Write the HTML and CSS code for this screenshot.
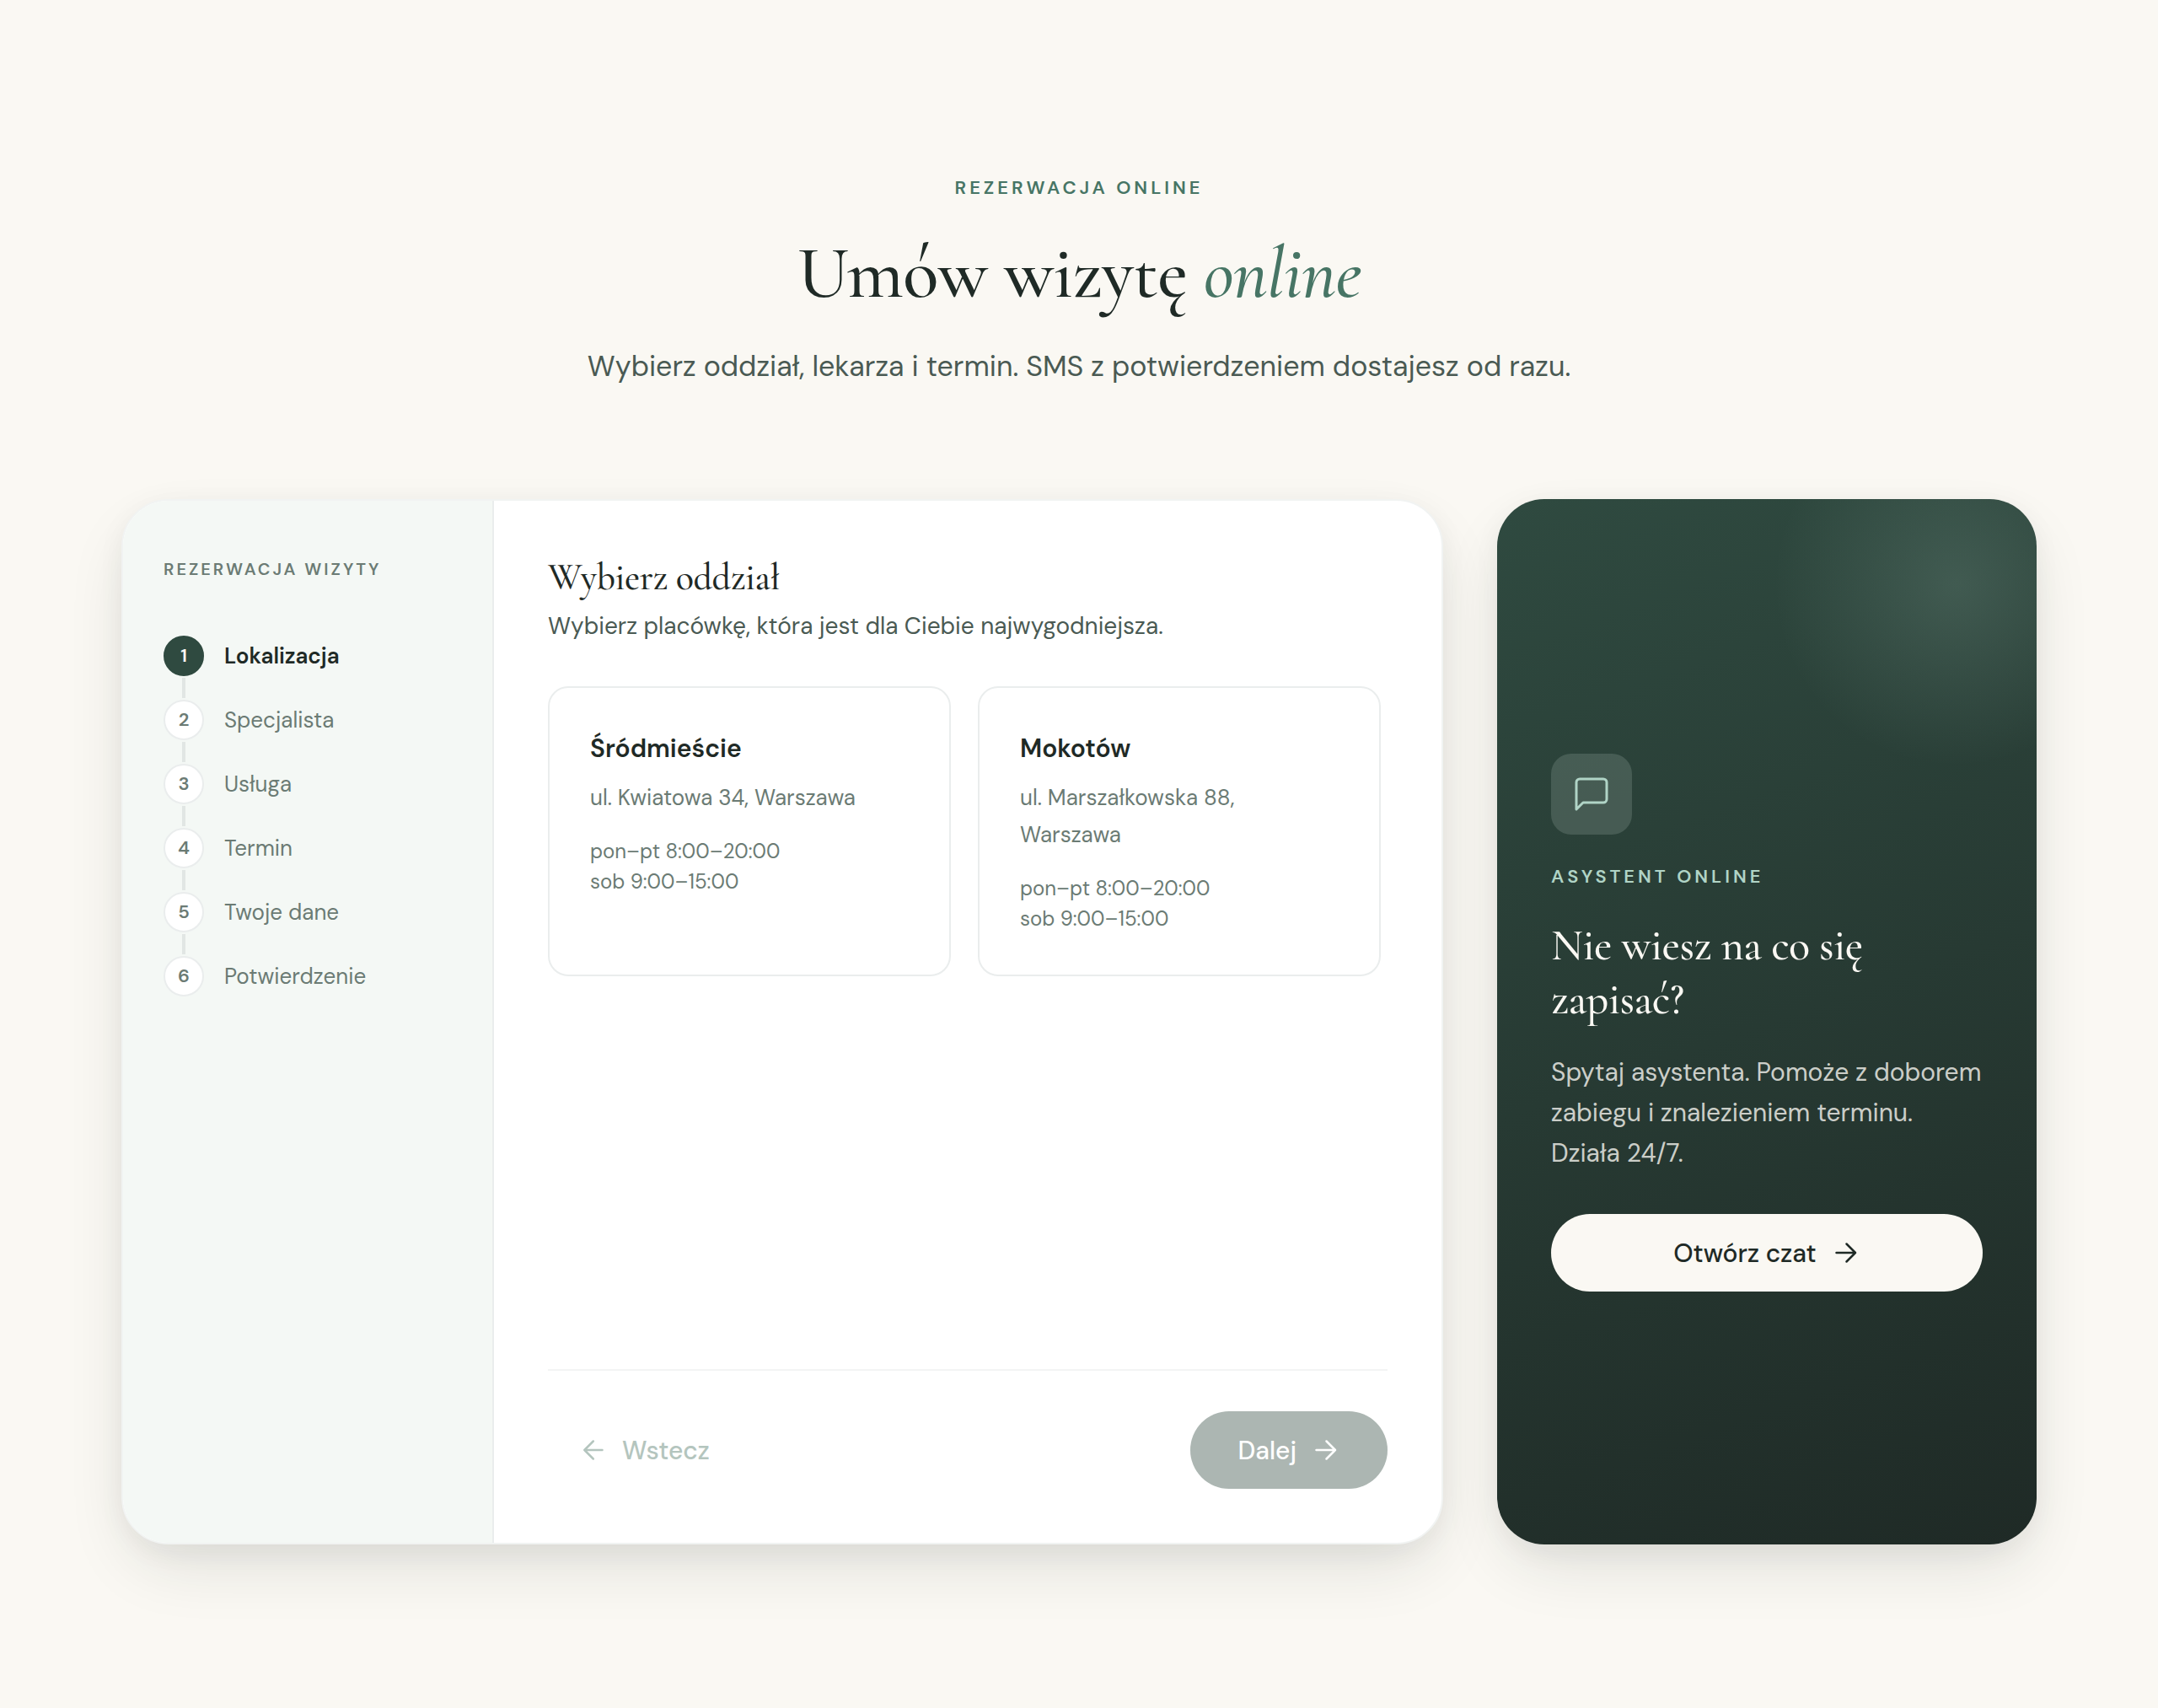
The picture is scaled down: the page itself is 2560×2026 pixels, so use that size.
FILE: index.html
```html
<!DOCTYPE html>
<html lang="pl">
<head>
<meta charset="utf-8">
<meta name="viewport" content="width=device-width, initial-scale=1">
<title>Umów wizytę online</title>
<link rel="stylesheet" href="styles.css">
</head>
<body>
<main class="booking">
  <header class="intro">
    <p class="eyebrow">REZERWACJA ONLINE</p>
    <h1 class="intro-title">Umów wizytę <em>online</em></h1>
    <p class="intro-lead">Wybierz oddział, lekarza i termin. SMS z potwierdzeniem dostajesz od razu.</p>
  </header>

  <div class="columns">
    <section class="wizard">
      <aside class="sidebar">
        <h2 class="sidebar-title">REZERWACJA WIZYTY</h2>
        <ol class="steps">
          <li class="step step-active"><span class="step-number">1</span><span class="step-label">Lokalizacja</span></li>
          <li class="step"><span class="step-number">2</span><span class="step-label">Specjalista</span></li>
          <li class="step"><span class="step-number">3</span><span class="step-label">Usługa</span></li>
          <li class="step"><span class="step-number">4</span><span class="step-label">Termin</span></li>
          <li class="step"><span class="step-number">5</span><span class="step-label">Twoje dane</span></li>
          <li class="step"><span class="step-number">6</span><span class="step-label">Potwierdzenie</span></li>
        </ol>
      </aside>
      <div class="panel">
        <h2 class="panel-title">Wybierz oddział</h2>
        <p class="panel-lead">Wybierz placówkę, która jest dla Ciebie najwygodniejsza.</p>
        <div class="branches">
          <button type="button" class="branch">
            <span class="branch-name">Śródmieście</span>
            <span class="branch-address">ul. Kwiatowa 34, Warszawa</span>
            <span class="branch-hours">pon–pt 8:00–20:00<br>sob 9:00–15:00</span>
          </button>
          <button type="button" class="branch">
            <span class="branch-name">Mokotów</span>
            <span class="branch-address">ul. Marszałkowska 88, Warszawa</span>
            <span class="branch-hours">pon–pt 8:00–20:00<br>sob 9:00–15:00</span>
          </button>
        </div>
        <div class="actions">
          <button type="button" class="button button-back" disabled>
            <svg class="arrow" viewBox="0 0 32 32" aria-hidden="true"><path d="M28.5 16H7.3M17.8 5.5 7.3 16l10.5 10.5"/></svg>
            Wstecz
          </button>
          <button type="button" class="button button-next" disabled>
            Dalej
            <svg class="arrow" viewBox="0 0 32 32" aria-hidden="true"><path d="M3.5 16H26M15.5 5.5 26 16 15.5 26.5"/></svg>
          </button>
        </div>
      </div>
    </section>

    <aside class="assistant">
      <span class="assistant-icon">
        <svg viewBox="0 0 24 24" aria-hidden="true"><path d="M21 15a2 2 0 0 1-2 2H7l-4 4V5a2 2 0 0 1 2-2h14a2 2 0 0 1 2 2z"/></svg>
      </span>
      <p class="assistant-label">ASYSTENT ONLINE</p>
      <h2 class="assistant-title">Nie wiesz na co się zapisać?</h2>
      <p class="assistant-text">Spytaj asystenta. Pomoże z doborem zabiegu i znalezieniem terminu. Działa 24/7.</p>
      <button type="button" class="button button-chat">
        Otwórz czat
        <svg class="arrow" viewBox="0 0 32 32" aria-hidden="true"><path d="M3.5 16H26M15.5 5.5 26 16 15.5 26.5"/></svg>
      </button>
    </aside>
  </div>
</main>
</body>
</html>
```
FILE: styles.css
```css
:root {
  --ink: #1f2a26;
  --forest: #2f4a40;
  --green: #477565;
  --text: #4a5a53;
  --muted: #6b7b74;
  --mint: #b0d4c6;
  --cream: #faf8f3;
  --line: #eaeded;
  --sans: "DM Sans", Inter, "Open Sans", sans-serif;
  --serif: "Cormorant Garamond", "Liberation Serif", serif;
}

* {
  box-sizing: border-box;
}

body {
  margin: 0;
  background: var(--cream);
  color: var(--ink);
  font-family: var(--sans);
}

h1, h2, p, ol {
  margin: 0;
  padding: 0;
  font-weight: 400;
}

button {
  font-family: inherit;
}

.booking {
  max-width: 2400px;
  margin: 0 auto;
  padding: 204px 64px 194px;
}

.intro {
  display: flex;
  flex-direction: column;
  align-items: center;
  margin-bottom: 128px;
  text-align: center;
}

.eyebrow {
  color: var(--green);
  font-size: 22px;
  font-weight: 600;
  line-height: 38px;
  letter-spacing: 4px;
}

.intro-title,
.panel-title,
.assistant-title {
  font-family: var(--serif);
  font-weight: 500;
  letter-spacing: -0.01em;
}

.intro-title {
  margin: 34px 0;
  font-size: 88px;
  line-height: 96px;
}

.intro-title em {
  color: var(--green);
}

.intro-lead {
  color: var(--text);
  font-size: 34px;
  line-height: 58px;
}

.columns {
  display: grid;
  grid-template-columns: minmax(0, 1fr) 640px;
  gap: 64px;
}

.wizard,
.assistant {
  min-height: 1240px;
  border-radius: 56px;
  box-shadow: 0 32px 80px -16px rgba(31, 42, 38, 0.14), 0 8px 32px rgba(31, 42, 38, 0.05);
}

.wizard {
  display: grid;
  grid-template-columns: 440px minmax(0, 1fr);
  overflow: hidden;
  border: 2px solid #f1f3f2;
  background: #fff;
}

.sidebar {
  padding: 64px 48px;
  border-right: 2px solid var(--line);
  background: #f4f8f5;
}

.sidebar-title {
  margin-bottom: 62px;
  color: var(--muted);
  font-size: 20px;
  font-weight: 600;
  line-height: 34px;
  letter-spacing: 3px;
}

.steps {
  display: flex;
  flex-direction: column;
  gap: 28px;
  list-style: none;
}

.step {
  position: relative;
  display: flex;
  align-items: center;
  gap: 24px;
  color: var(--muted);
  font-size: 26px;
  line-height: 40px;
}

.step:not(:last-child)::after {
  content: "";
  position: absolute;
  top: 50px;
  left: 22px;
  width: 4px;
  height: 24px;
  background: #e1e6e4;
}

.step-number {
  display: grid;
  place-items: center;
  width: 48px;
  height: 48px;
  border: 2px solid var(--line);
  border-radius: 50%;
  background: #fff;
  font-size: 22px;
  font-weight: 600;
}

.step-active {
  color: var(--ink);
  font-weight: 600;
}

.step-active .step-number {
  border-color: var(--forest);
  background: var(--forest);
  color: var(--cream);
}

.panel {
  display: flex;
  flex-direction: column;
  padding: 64px;
}

.panel-title {
  margin-bottom: 8px;
  font-size: 44px;
  line-height: 54px;
}

.panel-lead {
  margin-bottom: 48px;
  color: var(--text);
  font-size: 28px;
  line-height: 46px;
}

.branches {
  display: grid;
  grid-template-columns: repeat(2, minmax(0, 1fr));
  gap: 32px;
  padding-right: 8px;
}

.branch {
  display: flex;
  flex-direction: column;
  padding: 48px;
  border: 2px solid var(--line);
  border-radius: 24px;
  background: #fff;
  color: var(--muted);
  text-align: left;
}

.branch-name {
  margin-bottom: 12px;
  color: var(--ink);
  font-size: 30px;
  font-weight: 600;
  line-height: 48px;
}

.branch-address {
  margin-bottom: 24px;
  font-size: 26px;
  line-height: 44px;
}

.branch-hours {
  font-size: 24px;
  line-height: 36px;
}

.actions {
  display: flex;
  justify-content: space-between;
  margin-top: auto;
  padding-top: 48px;
  border-top: 2px solid #f3f4f4;
}

.button {
  display: flex;
  align-items: center;
  justify-content: center;
  gap: 20px;
  height: 92px;
  padding: 0 56px;
  border: 0;
  border-radius: 46px;
  font-size: 30px;
  font-weight: 500;
}

.arrow {
  width: 32px;
  height: 32px;
  fill: none;
  stroke: currentColor;
  stroke-width: 2.5;
  stroke-linecap: round;
  stroke-linejoin: round;
}

.button-back {
  padding: 0 36px;
  background: none;
  color: #b4c5be;
}

.button-next {
  background: #acb6b2;
  color: #fff;
}

.button-chat {
  background: var(--cream);
  color: var(--ink);
}

.assistant {
  display: flex;
  flex-direction: column;
  justify-content: center;
  padding: 66px 64px 64px;
  background:
    radial-gradient(circle 216px at calc(100% - 96px) 101px, rgba(176, 212, 198, 0.16), rgba(176, 212, 198, 0)),
    linear-gradient(160deg, var(--forest), var(--ink));
  color: var(--cream);
}

.assistant-icon {
  display: grid;
  place-items: center;
  width: 96px;
  height: 96px;
  margin-bottom: 32px;
  border-radius: 24px;
  background: rgba(240, 255, 250, 0.14);
}

.assistant-icon svg {
  width: 48px;
  height: 48px;
  fill: none;
  stroke: var(--mint);
  stroke-width: 1.5;
  stroke-linecap: round;
  stroke-linejoin: round;
}

.assistant-label {
  margin-bottom: 32px;
  color: var(--mint);
  font-size: 22px;
  font-weight: 600;
  line-height: 36px;
  letter-spacing: 4px;
}

.assistant-title {
  margin-bottom: 30px;
  font-size: 52px;
  line-height: 64px;
}

.assistant-text {
  margin-bottom: 48px;
  color: rgba(250, 248, 243, 0.8);
  font-size: 30px;
  line-height: 48px;
}
```
